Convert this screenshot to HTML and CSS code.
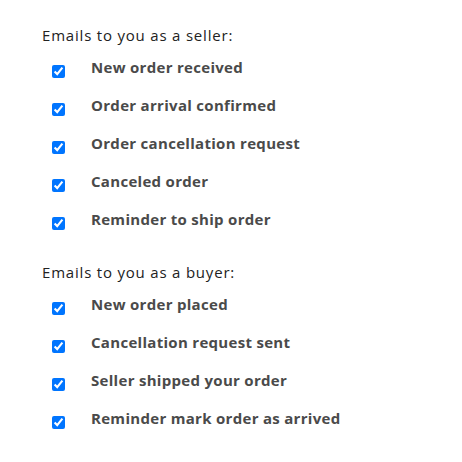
FILE: index.html
```html
<!DOCTYPE html>
<html>
<head>
<meta charset="utf-8">
<link rel="stylesheet" href="styles.css">
</head>
<body>
<div class="page">
  <section class="group">
    <h3 class="group-title">Emails to you as a seller:</h3>
    <ul class="options">
      <li class="option"><input type="checkbox" checked><span class="label">New order received</span></li>
      <li class="option"><input type="checkbox" checked><span class="label">Order arrival confirmed</span></li>
      <li class="option"><input type="checkbox" checked><span class="label">Order cancellation request</span></li>
      <li class="option"><input type="checkbox" checked><span class="label">Canceled order</span></li>
      <li class="option"><input type="checkbox" checked><span class="label">Reminder to ship order</span></li>
    </ul>
  </section>
  <section class="group">
    <h3 class="group-title">Emails to you as a buyer:</h3>
    <ul class="options">
      <li class="option"><input type="checkbox" checked><span class="label">New order placed</span></li>
      <li class="option"><input type="checkbox" checked><span class="label">Cancellation request sent</span></li>
      <li class="option"><input type="checkbox" checked><span class="label">Seller shipped your order</span></li>
      <li class="option"><input type="checkbox" checked><span class="label">Reminder mark order as arrived</span></li>
    </ul>
  </section>
</div>
</body>
</html>
```
FILE: styles.css
```css
html, body {
  margin: 0;
  padding: 0;
  background: #ffffff;
}
.page {
  padding: 25px 0 0 42px;
  font-family: "Open Sans", "Liberation Sans", sans-serif;
}
.group + .group {
  margin-top: 32px;
}
.group-title {
  margin: 0;
  font-size: 15px;
  line-height: 20px;
  font-weight: 400;
  letter-spacing: 0.8px;
  color: #222222;
}
.options {
  list-style: none;
  margin: 12px 0 0 0;
  padding: 0;
  display: flex;
  flex-direction: column;
  gap: 17px;
}
.option {
  display: flex;
  align-items: flex-start;
  height: 21px;
}
.option input {
  width: 13px;
  height: 13px;
  margin: 8px 26px 0 10px;
  flex: none;
}
.label {
  font-size: 15px;
  line-height: 20px;
  font-weight: 700;
  letter-spacing: 0.3px;
  color: #4a4a4a;
}
```
